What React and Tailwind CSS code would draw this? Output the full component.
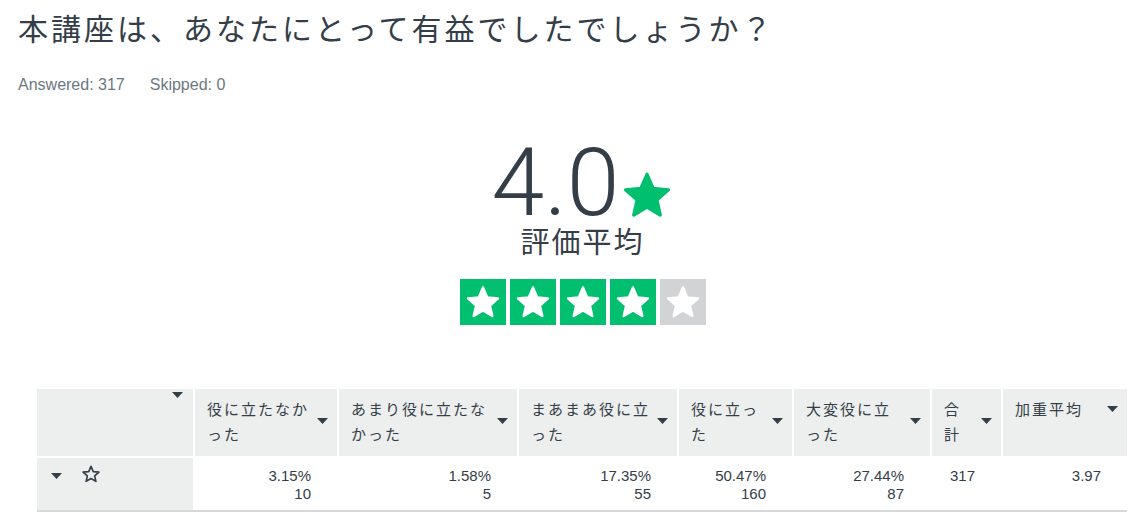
const headers = [
  ["役に立たなか", "った"],
  ["あまり役に立たな", "かった"],
  ["まあまあ役に立", "った"],
  ["役に立っ", "た"],
  ["大変役に立", "った"],
  ["合", "計"],
  ["加重平均"],
];

const values = [
  ["3.15%", "10"],
  ["1.58%", "5"],
  ["17.35%", "55"],
  ["50.47%", "160"],
  ["27.44%", "87"],
  ["317"],
  ["3.97"],
];

const starPoints =
  "12,2.8 14.7,9.08 21.51,9.71 16.37,14.22 17.88,20.89 12,17.4 6.12,20.89 7.63,14.22 2.49,9.71 9.3,9.08";

function Star({ className, fill = "currentColor", stroke = "currentColor", strokeWidth = 1.5 }) {
  return (
    <svg viewBox="0 0 24 24" className={className}>
      <polygon
        points={starPoints}
        fill={fill}
        stroke={stroke}
        strokeWidth={strokeWidth}
        strokeLinejoin="round"
      />
    </svg>
  );
}

function Caret({ className = "" }) {
  return (
    <svg viewBox="0 0 11 6" className={`h-[6px] w-[11px] shrink-0 ${className}`}>
      <polygon points="0,0 11,0 5.5,6" fill="#333e48" />
    </svg>
  );
}

export default function App() {
  return (
    <div className="min-h-screen bg-white pl-[18px] text-[#333e48] font-['Noto_Sans_CJK_JP',sans-serif]">
      <h1 className="pt-[9px] text-[30px] leading-[36px] tracking-[3px] font-normal">
        本講座は、あなたにとって有益でしたでしょうか？
      </h1>

      <div className="mt-[30px] flex gap-[25px] text-[16px] leading-[20px] text-[#6b787f] font-['Liberation_Sans',sans-serif]">
        <span>Answered: 317</span>
        <span>Skipped: 0</span>
      </div>

      <div className="mt-[48px] flex flex-col items-center">
        <div className="flex items-start">
          <span className="text-[95px] leading-[80px] font-light font-['Roboto',sans-serif]">
            4.0
          </span>
          <Star className="mt-[25px] h-[54px] w-[54px] text-[#00bf6f]" />
        </div>
        <div className="mt-[1px] text-[29px] leading-[32px] tracking-[2px]">評価平均</div>
        <div className="mt-[23px] flex gap-[4px]">
          {[0, 1, 2, 3, 4].map((i) => (
            <div
              key={i}
              className={`flex h-[46px] w-[46px] items-center justify-center ${
                i < 4 ? "bg-[#00bf6f]" : "bg-[#d1d3d4]"
              }`}
            >
              <Star className="h-[38px] w-[38px] text-white" />
            </div>
          ))}
        </div>
      </div>

      <div className="mt-[64px] ml-[19px] w-[1090px] border-b-2 border-[#d6d8d9]">
        <div className="grid grid-cols-[156px_142px_178px_158px_113px_136px_69px_124px] gap-[2px]">
          <div className="flex h-[67px] justify-end bg-[#edeeee] pr-[10px] pt-[3px]">
            <Caret />
          </div>
          {headers.map((lines, i) => (
            <div
              key={i}
              className="h-[67px] bg-[#edeeee] pl-3 pr-[9px] pt-[7px]"
            >
              <div className="flex items-center justify-between">
                <div className="whitespace-nowrap text-[15px] leading-[25px] tracking-[2px]">
                  {lines.map((l, j) => (
                    <div key={j}>{l}</div>
                  ))}
                </div>
                <Caret />
              </div>
            </div>
          ))}

          <div className="flex h-[52px] items-start bg-[#edeeee] pl-[14px] pt-[6px]">
            <Caret className="mt-[9px]" />
            <Star
              className="ml-[19px] h-[20px] w-[20px]"
              fill="none"
              stroke="#333e48"
              strokeWidth={2}
            />
          </div>
          {values.map((lines, i) => (
            <div
              key={i}
              className="h-[52px] pr-[26px] pt-[9px] text-right text-[15px] leading-[18px] font-['Liberation_Sans',sans-serif]"
            >
              {lines.map((l, j) => (
                <div key={j}>{l}</div>
              ))}
            </div>
          ))}
        </div>
      </div>
    </div>
  );
}
